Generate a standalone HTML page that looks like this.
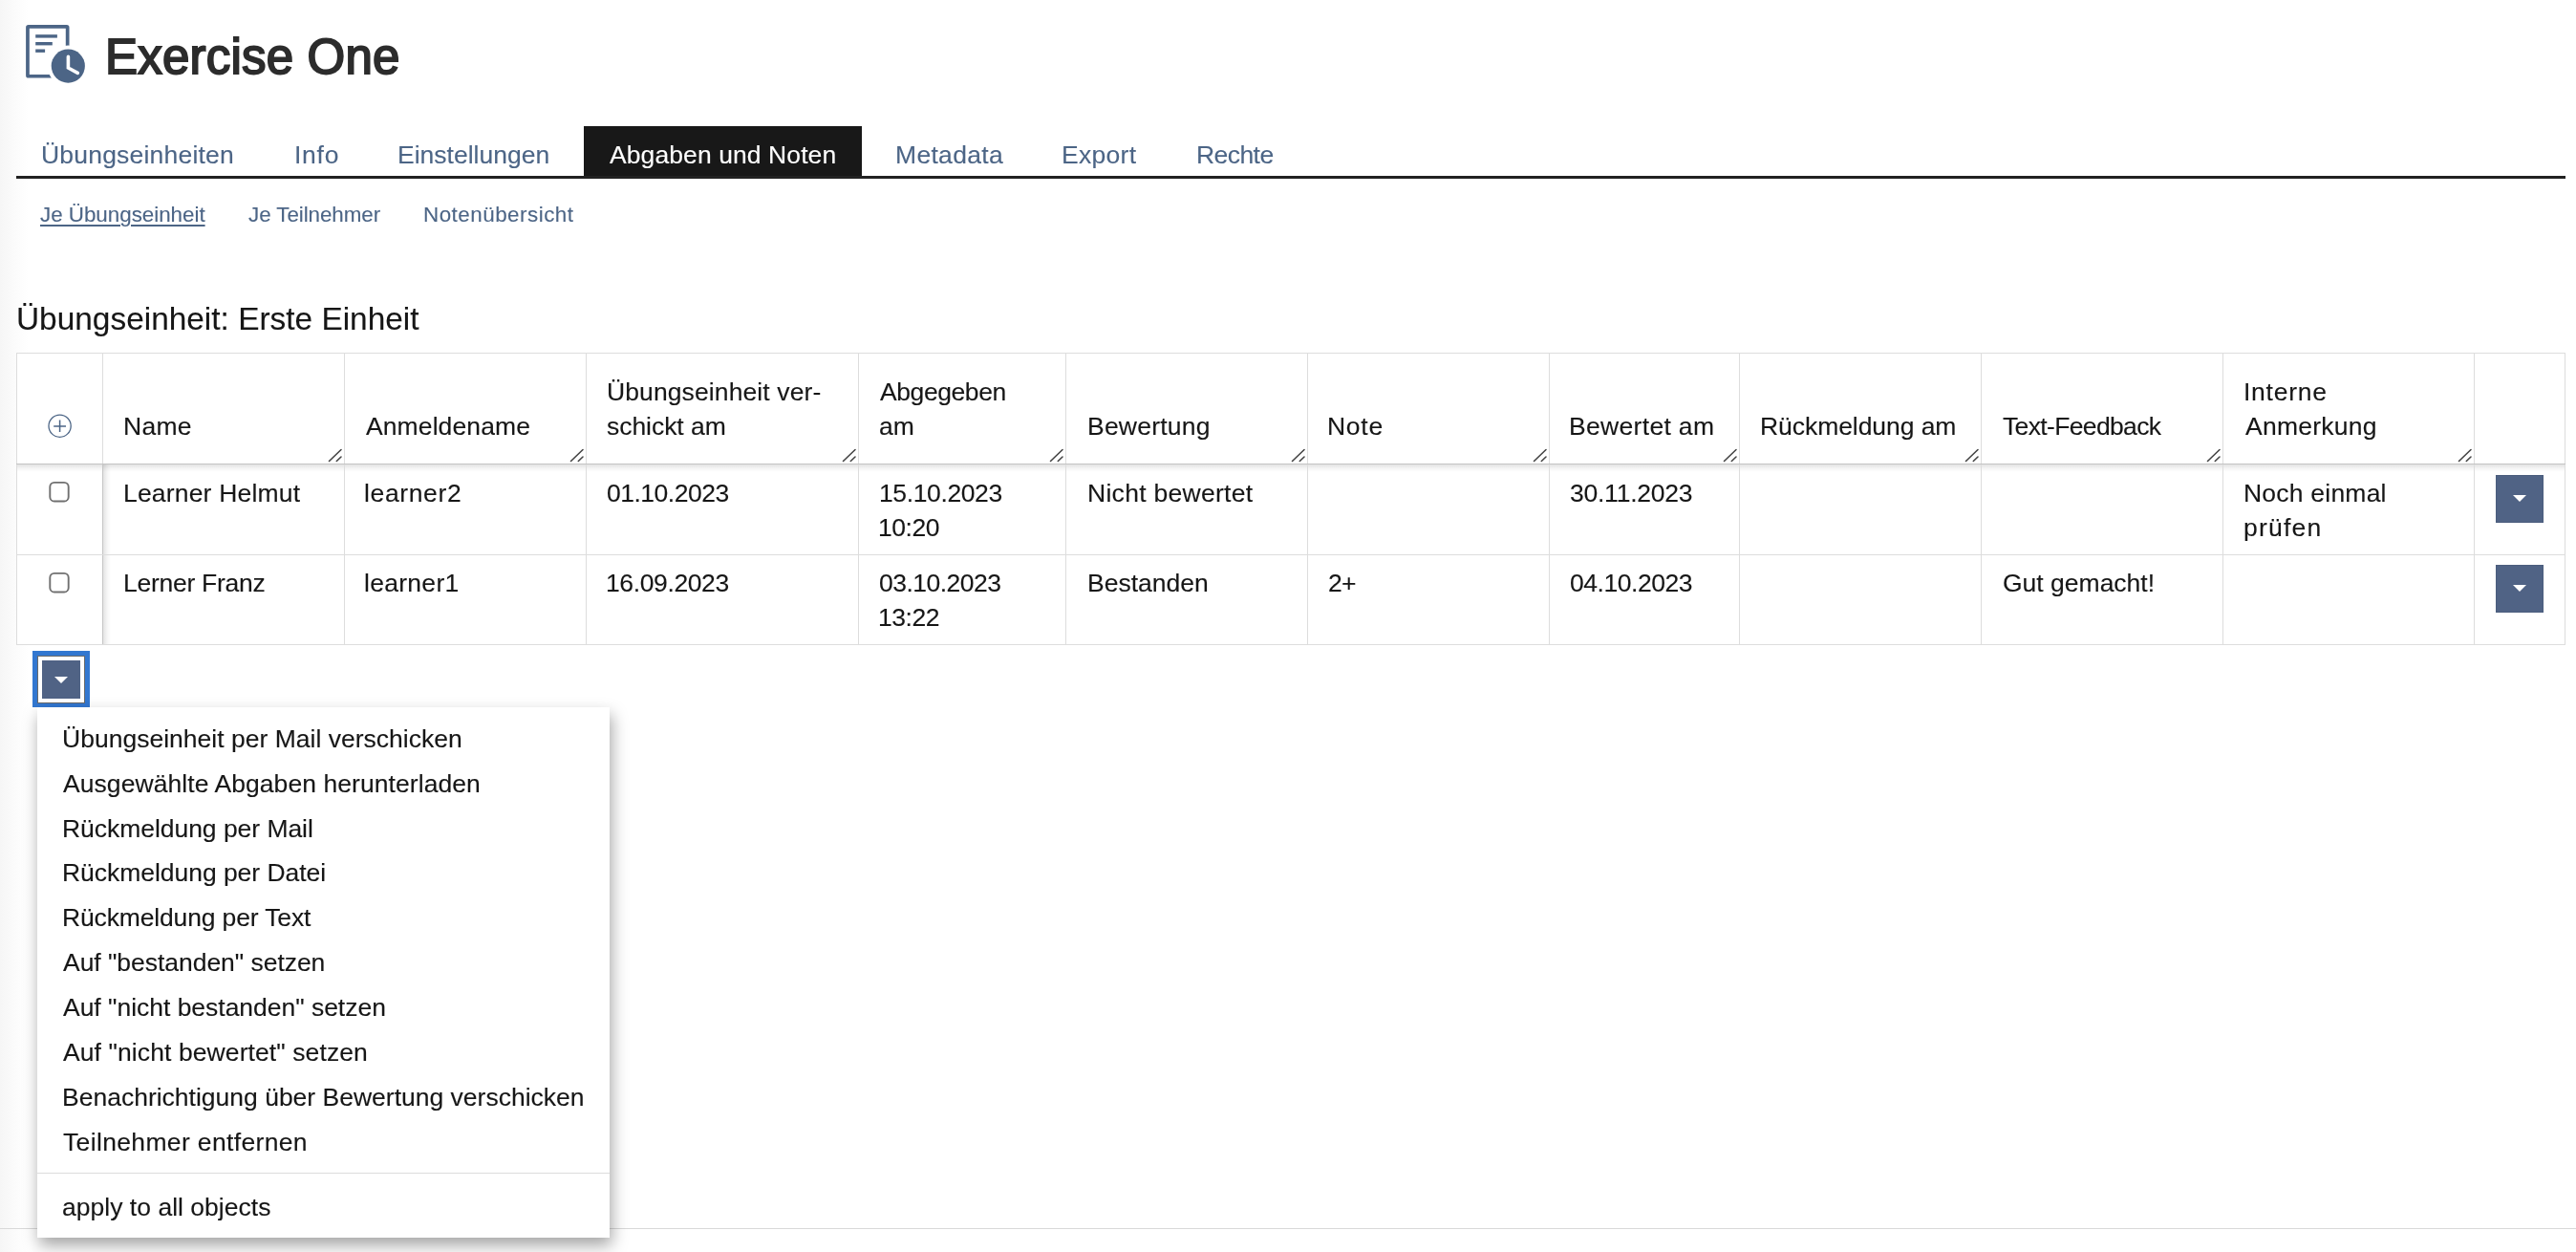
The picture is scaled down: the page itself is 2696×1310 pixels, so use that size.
<!DOCTYPE html>
<html><head><meta charset="utf-8"><style>
html,body{margin:0;padding:0;background:#fff;width:2696px;height:1310px;overflow:hidden;position:relative}
body{font-family:"Liberation Sans",sans-serif}
.t{position:absolute;white-space:nowrap;will-change:transform;-webkit-text-stroke:0.12px currentColor}
.r{position:absolute}
</style></head><body>
<div class="r" style="left:0px;top:0px;width:30px;height:1310px;background:linear-gradient(to right,#f6f6f6,#fbfbfb 50%,#ffffff)"></div>
<svg class="r" style="left:20px;top:20px" width="75" height="75" viewBox="20 20 75 75">
<rect x="28.95" y="27.85" width="41.7" height="51.9" rx="0.8" stroke="#4c6586" stroke-width="3.7" fill="none"/>
<rect x="37.2" y="36.2" width="22.7" height="3.4" fill="#4c6586"/>
<rect x="37.2" y="44" width="17.6" height="3.4" fill="#4c6586"/>
<rect x="37.2" y="51.5" width="9.9" height="3.4" fill="#4c6586"/>
<circle cx="71.3" cy="69.1" r="21.6" fill="#fff"/>
<circle cx="71.3" cy="69.1" r="17.6" fill="#4c6586"/>
<path d="M71.4,59.3 V71 L81.3,76.3" stroke="#fff" stroke-width="3.6" fill="none" stroke-linecap="round" stroke-linejoin="miter"/>
</svg>
<div class="t" style="left:110.2px;top:30.32px;font-size:51px;line-height:60px;color:#2c2c2c;font-weight:400;letter-spacing:0.209px;-webkit-text-stroke:1.9px #2c2c2c">Exercise One</div>
<div class="r" style="left:611px;top:132px;width:291px;height:53px;background:#181818"></div>
<div class="t" style="left:43.4px;top:143.51px;font-size:26.5px;line-height:36px;color:#4c6586;font-weight:400;letter-spacing:0.201px;">Übungseinheiten</div>
<div class="t" style="left:307.6px;top:143.51px;font-size:26.5px;line-height:36px;color:#4c6586;font-weight:400;letter-spacing:0.733px;">Info</div>
<div class="t" style="left:416.0px;top:143.51px;font-size:26.5px;line-height:36px;color:#4c6586;font-weight:400;letter-spacing:0.0px;">Einstellungen</div>
<div class="t" style="left:638.1px;top:143.51px;font-size:26.5px;line-height:36px;color:#ffffff;font-weight:400;letter-spacing:0.087px;">Abgaben und Noten</div>
<div class="t" style="left:936.8px;top:143.51px;font-size:26.5px;line-height:36px;color:#4c6586;font-weight:400;letter-spacing:0.315px;">Metadata</div>
<div class="t" style="left:1111.0px;top:143.51px;font-size:26.5px;line-height:36px;color:#4c6586;font-weight:400;letter-spacing:0.28px;">Export</div>
<div class="t" style="left:1251.6px;top:143.51px;font-size:26.5px;line-height:36px;color:#4c6586;font-weight:400;letter-spacing:-0.56px;">Rechte</div>
<div class="r" style="left:17px;top:184px;width:2668px;height:3px;background:#222222"></div>
<div class="t" style="left:41.8px;top:206.63px;font-size:22.4px;line-height:36px;color:#4c6586;font-weight:400;letter-spacing:-0.027px;text-decoration:underline;text-underline-offset:3px;text-decoration-thickness:1.5px">Je Übungseinheit</div>
<div class="t" style="left:259.5px;top:206.63px;font-size:22.4px;line-height:36px;color:#4c6586;font-weight:400;letter-spacing:-0.067px;">Je Teilnehmer</div>
<div class="t" style="left:443.3px;top:206.63px;font-size:22.4px;line-height:36px;color:#4c6586;font-weight:400;letter-spacing:0.493px;">Notenübersicht</div>
<div class="t" style="left:17.1px;top:312.22px;font-size:33.4px;line-height:44px;color:#161616;font-weight:400;letter-spacing:0.007px;">Übungseinheit: Erste Einheit</div>
<div class="r" style="left:17px;top:369px;width:2668px;height:306px;border:1px solid #dddddd;box-sizing:border-box;background:#fff"></div>
<div class="r" style="left:18px;top:486px;width:2666px;height:8px;background:linear-gradient(to bottom,rgba(0,0,0,0.11),rgba(0,0,0,0.03) 60%,rgba(0,0,0,0))"></div>
<div class="r" style="left:108px;top:486px;width:8px;height:188px;background:linear-gradient(to right,rgba(0,0,0,0.11),rgba(0,0,0,0.03) 60%,rgba(0,0,0,0))"></div>
<div class="r" style="left:107px;top:369px;width:1px;height:305px;background:#dddddd"></div>
<div class="r" style="left:360px;top:369px;width:1px;height:305px;background:#dddddd"></div>
<div class="r" style="left:613px;top:369px;width:1px;height:305px;background:#dddddd"></div>
<div class="r" style="left:898px;top:369px;width:1px;height:305px;background:#dddddd"></div>
<div class="r" style="left:1115px;top:369px;width:1px;height:305px;background:#dddddd"></div>
<div class="r" style="left:1368px;top:369px;width:1px;height:305px;background:#dddddd"></div>
<div class="r" style="left:1621px;top:369px;width:1px;height:305px;background:#dddddd"></div>
<div class="r" style="left:1820px;top:369px;width:1px;height:305px;background:#dddddd"></div>
<div class="r" style="left:2073px;top:369px;width:1px;height:305px;background:#dddddd"></div>
<div class="r" style="left:2326px;top:369px;width:1px;height:305px;background:#dddddd"></div>
<div class="r" style="left:2589px;top:369px;width:1px;height:305px;background:#dddddd"></div>
<div class="r" style="left:17px;top:485px;width:2668px;height:1px;background:#c3c3c3"></div>
<div class="r" style="left:107px;top:486px;width:1px;height:188px;background:#c6c6c6"></div>
<div class="r" style="left:17px;top:580px;width:2668px;height:1px;background:#dddddd"></div>
<div class="t" style="left:129.0px;top:427.61px;font-size:26.5px;line-height:36px;color:#161616;font-weight:400;letter-spacing:0.266px;">Name</div>
<svg class="r" style="left:342px;top:467px" width="18" height="18" viewBox="0 0 18 18"><path d="M2.5,15.5 L15,3.5 M10.3,15.5 L15,11" stroke="#444" stroke-width="1.6" stroke-linecap="round"/></svg>
<div class="t" style="left:382.8px;top:427.61px;font-size:26.5px;line-height:36px;color:#161616;font-weight:400;letter-spacing:0.1px;">Anmeldename</div>
<svg class="r" style="left:595px;top:467px" width="18" height="18" viewBox="0 0 18 18"><path d="M2.5,15.5 L15,3.5 M10.3,15.5 L15,11" stroke="#444" stroke-width="1.6" stroke-linecap="round"/></svg>
<div class="t" style="left:635.4px;top:427.61px;font-size:26.5px;line-height:36px;color:#161616;font-weight:400;letter-spacing:-0.046px;">schickt am</div>
<div class="t" style="left:635.2px;top:391.61px;font-size:26.5px;line-height:36px;color:#161616;font-weight:400;letter-spacing:0.106px;">Übungseinheit ver-</div>
<svg class="r" style="left:880px;top:467px" width="18" height="18" viewBox="0 0 18 18"><path d="M2.5,15.5 L15,3.5 M10.3,15.5 L15,11" stroke="#444" stroke-width="1.6" stroke-linecap="round"/></svg>
<div class="t" style="left:920.0px;top:427.61px;font-size:26.5px;line-height:36px;color:#161616;font-weight:400;letter-spacing:0px;">am</div>
<div class="t" style="left:921.2px;top:391.61px;font-size:26.5px;line-height:36px;color:#161616;font-weight:400;letter-spacing:-0.425px;">Abgegeben</div>
<svg class="r" style="left:1097px;top:467px" width="18" height="18" viewBox="0 0 18 18"><path d="M2.5,15.5 L15,3.5 M10.3,15.5 L15,11" stroke="#444" stroke-width="1.6" stroke-linecap="round"/></svg>
<div class="t" style="left:1137.6px;top:427.61px;font-size:26.5px;line-height:36px;color:#161616;font-weight:400;letter-spacing:0.225px;">Bewertung</div>
<svg class="r" style="left:1350px;top:467px" width="18" height="18" viewBox="0 0 18 18"><path d="M2.5,15.5 L15,3.5 M10.3,15.5 L15,11" stroke="#444" stroke-width="1.6" stroke-linecap="round"/></svg>
<div class="t" style="left:1389.0px;top:427.61px;font-size:26.5px;line-height:36px;color:#161616;font-weight:400;letter-spacing:0.734px;">Note</div>
<svg class="r" style="left:1603px;top:467px" width="18" height="18" viewBox="0 0 18 18"><path d="M2.5,15.5 L15,3.5 M10.3,15.5 L15,11" stroke="#444" stroke-width="1.6" stroke-linecap="round"/></svg>
<div class="t" style="left:1642.4px;top:427.61px;font-size:26.5px;line-height:36px;color:#161616;font-weight:400;letter-spacing:0.32px;">Bewertet am</div>
<svg class="r" style="left:1802px;top:467px" width="18" height="18" viewBox="0 0 18 18"><path d="M2.5,15.5 L15,3.5 M10.3,15.5 L15,11" stroke="#444" stroke-width="1.6" stroke-linecap="round"/></svg>
<div class="t" style="left:1841.8px;top:427.61px;font-size:26.5px;line-height:36px;color:#161616;font-weight:400;letter-spacing:-0.06px;">Rückmeldung am</div>
<svg class="r" style="left:2055px;top:467px" width="18" height="18" viewBox="0 0 18 18"><path d="M2.5,15.5 L15,3.5 M10.3,15.5 L15,11" stroke="#444" stroke-width="1.6" stroke-linecap="round"/></svg>
<div class="t" style="left:2096.4px;top:427.61px;font-size:26.5px;line-height:36px;color:#161616;font-weight:400;letter-spacing:-0.65px;">Text-Feedback</div>
<svg class="r" style="left:2308px;top:467px" width="18" height="18" viewBox="0 0 18 18"><path d="M2.5,15.5 L15,3.5 M10.3,15.5 L15,11" stroke="#444" stroke-width="1.6" stroke-linecap="round"/></svg>
<div class="t" style="left:2349.6px;top:427.61px;font-size:26.5px;line-height:36px;color:#161616;font-weight:400;letter-spacing:0.252px;">Anmerkung</div>
<div class="t" style="left:2347.6px;top:391.61px;font-size:26.5px;line-height:36px;color:#161616;font-weight:400;letter-spacing:0.734px;">Interne</div>
<svg class="r" style="left:2571px;top:467px" width="18" height="18" viewBox="0 0 18 18"><path d="M2.5,15.5 L15,3.5 M10.3,15.5 L15,11" stroke="#444" stroke-width="1.6" stroke-linecap="round"/></svg>
<svg class="r" style="left:48px;top:431px" width="30" height="30" viewBox="0 0 30 30"><circle cx="14.6" cy="14.7" r="11.6" stroke="#4c6586" stroke-width="1.3" fill="none"/><path d="M8.2,14.9 H21 M14.6,8.6 V21" stroke="#4c6586" stroke-width="1.5"/></svg>
<svg class="r" style="left:48px;top:501px" width="28" height="28" viewBox="0 0 28 28"><rect x="4.3" y="3.9" width="19.4" height="19.6" rx="4.6" stroke="#707070" stroke-width="1.9" fill="#fff"/></svg>
<div class="t" style="left:129.0px;top:497.81px;font-size:26.5px;line-height:36px;color:#161616;font-weight:400;letter-spacing:0.184px;">Learner Helmut</div>
<div class="t" style="left:380.8px;top:497.81px;font-size:26.5px;line-height:36px;color:#161616;font-weight:400;letter-spacing:0.628px;">learner2</div>
<div class="t" style="left:635.4px;top:497.81px;font-size:26.5px;line-height:36px;color:#161616;font-weight:400;letter-spacing:-0.49px;">01.10.2023</div>
<div class="t" style="left:919.6px;top:497.81px;font-size:26.5px;line-height:36px;color:#161616;font-weight:400;letter-spacing:-0.379px;">15.10.2023</div>
<div class="t" style="left:919.4px;top:533.81px;font-size:26.5px;line-height:36px;color:#161616;font-weight:400;letter-spacing:-0.45px;">10:20</div>
<div class="t" style="left:1137.6px;top:497.81px;font-size:26.5px;line-height:36px;color:#161616;font-weight:400;letter-spacing:0.291px;">Nicht bewertet</div>
<div class="t" style="left:1643.4px;top:497.81px;font-size:26.5px;line-height:36px;color:#161616;font-weight:400;letter-spacing:-0.244px;">30.11.2023</div>
<div class="t" style="left:2347.6px;top:497.81px;font-size:26.5px;line-height:36px;color:#161616;font-weight:400;letter-spacing:0.22px;">Noch einmal</div>
<div class="t" style="left:2347.6px;top:533.81px;font-size:26.5px;line-height:36px;color:#161616;font-weight:400;letter-spacing:1.2px;">prüfen</div>
<div class="r" style="left:2612px;top:497px;width:50px;height:50px;background:#506385;box-shadow:inset 0 0 0 1px rgba(0,0,0,0.06)"></div>
<div class="r" style="left:2630px;top:518px;width:0;height:0;border-left:7.2px solid transparent;border-right:7.2px solid transparent;border-top:7.4px solid #fff"></div>
<svg class="r" style="left:48px;top:596px" width="28" height="28" viewBox="0 0 28 28"><rect x="4.3" y="3.9" width="19.4" height="19.6" rx="4.6" stroke="#707070" stroke-width="1.9" fill="#fff"/></svg>
<div class="t" style="left:129.0px;top:591.81px;font-size:26.5px;line-height:36px;color:#161616;font-weight:400;letter-spacing:-0.273px;">Lerner Franz</div>
<div class="t" style="left:380.8px;top:591.81px;font-size:26.5px;line-height:36px;color:#161616;font-weight:400;letter-spacing:0.286px;">learner1</div>
<div class="t" style="left:634.4px;top:591.81px;font-size:26.5px;line-height:36px;color:#161616;font-weight:400;letter-spacing:-0.379px;">16.09.2023</div>
<div class="t" style="left:920.2px;top:591.81px;font-size:26.5px;line-height:36px;color:#161616;font-weight:400;letter-spacing:-0.511px;">03.10.2023</div>
<div class="t" style="left:919.4px;top:627.81px;font-size:26.5px;line-height:36px;color:#161616;font-weight:400;letter-spacing:-0.45px;">13:22</div>
<div class="t" style="left:1137.6px;top:591.81px;font-size:26.5px;line-height:36px;color:#161616;font-weight:400;letter-spacing:0.0px;">Bestanden</div>
<div class="t" style="left:1390.0px;top:591.81px;font-size:26.5px;line-height:36px;color:#161616;font-weight:400;letter-spacing:-0.8px;">2+</div>
<div class="t" style="left:1643.4px;top:591.81px;font-size:26.5px;line-height:36px;color:#161616;font-weight:400;letter-spacing:-0.466px;">04.10.2023</div>
<div class="t" style="left:2095.6px;top:591.81px;font-size:26.5px;line-height:36px;color:#161616;font-weight:400;letter-spacing:0.0px;">Gut gemacht!</div>
<div class="r" style="left:2612px;top:591px;width:50px;height:50px;background:#506385;box-shadow:inset 0 0 0 1px rgba(0,0,0,0.06)"></div>
<div class="r" style="left:2630px;top:612px;width:0;height:0;border-left:7.2px solid transparent;border-right:7.2px solid transparent;border-top:7.4px solid #fff"></div>
<div class="r" style="left:0px;top:1285px;width:2696px;height:1px;background:#d9d9d9"></div>
<div class="r" style="left:34px;top:681px;width:60px;height:59px;background:#3277d0"></div>
<div class="r" style="left:39px;top:686px;width:50px;height:50px;background:#fff;box-shadow:inset 0 0 0 1px #6a6a6a"></div>
<div class="r" style="left:44px;top:691px;width:40px;height:40px;background:#506385"></div>
<div class="r" style="left:57px;top:708px;width:0;height:0;border-left:7px solid transparent;border-right:7px solid transparent;border-top:7px solid #fff"></div>
<div class="r" style="left:39px;top:740px;width:599px;height:555px;background:#fff;box-shadow:2px 8px 16px rgba(0,0,0,0.36)"></div>
<div class="t" style="left:65.1px;top:754.91px;font-size:26.5px;line-height:36px;color:#161616;font-weight:400;letter-spacing:0.012px;">Übungseinheit per Mail verschicken</div>
<div class="t" style="left:65.9px;top:801.76px;font-size:26.5px;line-height:36px;color:#161616;font-weight:400;letter-spacing:0.068px;">Ausgewählte Abgaben herunterladen</div>
<div class="t" style="left:65.1px;top:848.61px;font-size:26.5px;line-height:36px;color:#161616;font-weight:400;letter-spacing:-0.042px;">Rückmeldung per Mail</div>
<div class="t" style="left:65.1px;top:895.46px;font-size:26.5px;line-height:36px;color:#161616;font-weight:400;letter-spacing:-0.04px;">Rückmeldung per Datei</div>
<div class="t" style="left:65.1px;top:942.31px;font-size:26.5px;line-height:36px;color:#161616;font-weight:400;letter-spacing:-0.149px;">Rückmeldung per Text</div>
<div class="t" style="left:65.9px;top:989.16px;font-size:26.5px;line-height:36px;color:#161616;font-weight:400;letter-spacing:-0.039px;">Auf &quot;bestanden&quot; setzen</div>
<div class="t" style="left:65.9px;top:1036.01px;font-size:26.5px;line-height:36px;color:#161616;font-weight:400;letter-spacing:-0.023px;">Auf &quot;nicht bestanden&quot; setzen</div>
<div class="t" style="left:65.9px;top:1082.86px;font-size:26.5px;line-height:36px;color:#161616;font-weight:400;letter-spacing:0.093px;">Auf &quot;nicht bewertet&quot; setzen</div>
<div class="t" style="left:65.1px;top:1129.71px;font-size:26.5px;line-height:36px;color:#161616;font-weight:400;letter-spacing:0.0px;">Benachrichtigung über Bewertung verschicken</div>
<div class="t" style="left:65.9px;top:1176.56px;font-size:26.5px;line-height:36px;color:#161616;font-weight:400;letter-spacing:0.348px;">Teilnehmer entfernen</div>
<div class="r" style="left:39px;top:1227px;width:599px;height:1px;background:#dcdcdc"></div>
<div class="t" style="left:65.1px;top:1245.41px;font-size:26.5px;line-height:36px;color:#161616;font-weight:400;letter-spacing:0.022px;">apply to all objects</div>
</body></html>
